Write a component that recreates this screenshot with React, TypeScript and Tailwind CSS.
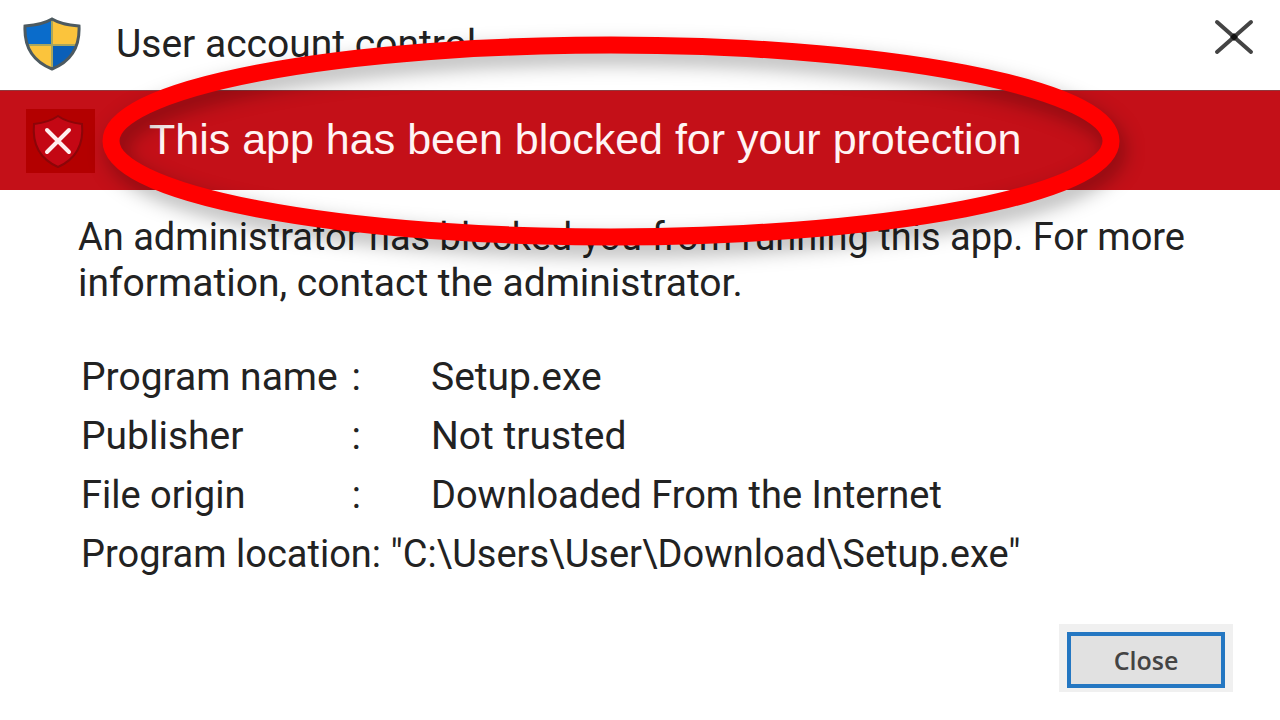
const details = [
  { label: "Program name", value: "Setup.exe", size: "text-[39px]" },
  { label: "Publisher", value: "Not trusted", size: "text-[39px]" },
  { label: "File origin", value: "Downloaded From the Internet", size: "text-[38px]" },
];

function UacShield() {
  return (
    <svg viewBox="0 0 60 54" className="h-[54px] w-[60px]" aria-hidden="true">
      <defs>
        <clipPath id="uac-shield">
          <path d="M30 2C38 7 47 8 57 9C58 29 50 44 30 52C10 44 2 29 3 9C13 8 22 7 30 2Z" />
        </clipPath>
      </defs>
      <g clipPath="url(#uac-shield)">
        <path d="M0 0H30V28H0Z" fill="#0a6ccb" />
        <path d="M30 0H60V28H30Z" fill="#fbc43c" />
        <path d="M0 28H30V54H0Z" fill="#fbc43c" />
        <path d="M30 28H60V54H30Z" fill="#0a5fb8" />
        <path d="M30 0V54M0 28H60" stroke="#a9a65c" strokeWidth="2" />
      </g>
      <path
        d="M30 2C38 7 47 8 57 9C58 29 50 44 30 52C10 44 2 29 3 9C13 8 22 7 30 2Z"
        fill="none"
        stroke="#4d5a60"
        strokeWidth="3"
      />
    </svg>
  );
}

function BlockedShield() {
  return (
    <svg viewBox="0 0 69 64" className="h-16 w-[69px] bg-[#b30000]" aria-hidden="true">
      <path
        d="M32 7C39 12 47 14 56 15C58 36 50 50 32 58C14 50 6 36 8 15C17 14 25 12 32 7Z"
        fill="#c40714"
        stroke="#8c0508"
        strokeWidth="2"
      />
      <path d="M21 21L43 43M43 21L21 43" stroke="#ffeeee" strokeWidth="4" strokeLinecap="round" />
    </svg>
  );
}

// Hand-placed marker that circles the warning
function Highlight() {
  return (
    <svg
      viewBox="0 0 1060 250"
      className="pointer-events-none absolute -top-[70px] left-20 h-[250px] w-[1060px] overflow-visible drop-shadow-[5px_9px_10px_rgba(0,0,0,0.33)]"
      aria-hidden="true"
    >
      <ellipse cx="531" cy="120" rx="500" ry="96" fill="none" stroke="#ff0000" strokeWidth="17" />
    </svg>
  );
}

export default function App() {
  return (
    <main className="min-h-screen overflow-hidden bg-white font-['Roboto',sans-serif] text-[39px] text-[#222222]">
      <header className="flex h-[90px] items-start justify-between pl-[22px] pr-6">
        <div className="flex items-center gap-[34px] pt-[17px]">
          <UacShield />
          <h1 className="whitespace-nowrap leading-[54px]">User account control</h1>
        </div>
        <button type="button" aria-label="Close window" className="mt-[17px]">
          <svg viewBox="0 0 44 40" className="h-10 w-11" aria-hidden="true">
            <path d="M5 5L39 35M39 5L5 35" stroke="#444444" strokeWidth="4" strokeLinecap="round" />
            <path d="M22 16L26 20L22 24L18 20Z" fill="#111111" />
          </svg>
        </button>
      </header>

      <section className="relative flex h-[100px] items-center gap-[54px] border-t border-[#8f3a3e] bg-[#c41018] pl-[26px]">
        <BlockedShield />
        <h2 className="whitespace-nowrap pb-1 font-['Liberation_Sans',sans-serif] text-[43px] leading-[50px] text-[#fff4f4]">
          This app has been blocked for your protection
        </h2>
        <Highlight />
      </section>

      <p className="pl-[78px] pt-6 leading-[46px]">
        <span className="block text-[38px]">
          An administrator has blocked you from running this app. For more
        </span>
        <span className="block">information, contact the administrator.</span>
      </p>

      <div className="pl-[81px] pt-[42px] leading-[59px]">
        <dl>
          {details.map((item) => (
            <div key={item.label} className={`flex ${item.size}`}>
              <dt className="flex w-[280px] justify-between">
                {item.label} <span>:</span>
              </dt>
              <dd className="pl-[70px]">{item.value}</dd>
            </div>
          ))}
        </dl>
        <p className="text-[38px]">Program location: "C:\Users\User\Download\Setup.exe"</p>
      </div>

      <footer className="flex justify-end pr-[47px] pt-10">
        <div className="bg-[#f0f0f0] px-2 pb-1 pt-2">
          <button
            type="button"
            className="block h-[56px] w-[158px] border-4 border-[#2477c2] bg-[#e1e1e1] font-['Open_Sans',sans-serif] text-[25px] font-semibold leading-8 text-[#444444]"
          >
            Close
          </button>
        </div>
      </footer>
    </main>
  );
}
